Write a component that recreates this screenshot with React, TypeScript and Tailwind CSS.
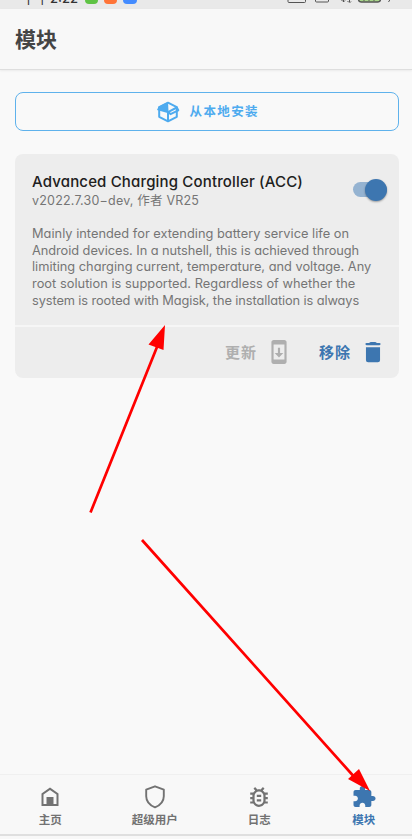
import React from "react";

const ui = "font-['Inter','Noto_Sans_CJK_SC',sans-serif]";
const cjk = "font-['Noto_Sans_CJK_SC',sans-serif]";

const description = [
  { text: "Mainly intended for extending battery service life on", track: "tracking-[0.020px]" },
  { text: "Android devices. In a nutshell, this is achieved through", track: "tracking-[-0.055px]" },
  { text: "limiting charging current, temperature, and voltage. Any", track: "tracking-[0px]" },
  { text: "root solution is supported. Regardless of whether the", track: "tracking-[0.035px]" },
  { text: "system is rooted with Magisk, the installation is always", track: "tracking-[-0.095px]" },
];

function StatusBar() {
  return (
    <div className="flex h-[9px] items-end overflow-hidden bg-[#e9e9e9] pl-[22px] text-[#333]">
      <div className={`${cjk} flex h-[9px] w-[63px] items-end whitespace-nowrap text-[13.500px] leading-[13px]`}>
        <span className="mb-[5px]">下午</span>
        <span className="mb-[4px] ml-px font-['Inter',sans-serif] text-[13px] font-medium">2:22</span>
      </div>
      <div className="flex h-[9px] gap-[6px]">
        <i className="-mt-[10px] h-[14px] w-[13px] rounded-[4px] bg-[#5fc344]" />
        <i className="-mt-[10px] h-[14px] w-[13px] rounded-[4px] bg-[#ff7438]" />
        <i className="-mt-[10px] h-[14px] w-[14px] rounded-[4px] bg-[#448cff]" />
      </div>
      <svg className="ml-auto mr-[24px] h-[9px] w-[106px]" viewBox="282 0 106 9" fill="none" stroke="#555" overflow="visible">
        <path d="M288-5v6.500q0 1 1 1h15.500q1 0 1-1V-5M315.500-5v6q0 1 1 1h11q1 0 1-1V-5" />
        <path d="M343.500-3v5M341.500 0l2 2 2-2M349.500-3v6M347.500 1l2 2 2-2" strokeDasharray="2 1" />
        <path d="M358.500-6v5q0 3 3 3h16q3 0 3-3v-5" fill="#a8d68a" strokeWidth="1.400" />
        <path d="M364 0v1M369 0v1M374 0v1" />
        <path d="M391-2l-2.500 4" />
      </svg>
    </div>
  );
}

function BoxIcon() {
  return (
    <svg className="h-[22px] w-[24px]" viewBox="0 0 24 22" fill="none" stroke="#4eabef" strokeWidth="2" strokeLinejoin="round">
      <path d="M12 1.700L20.800 6.200V15.800L12 20.300L3.200 15.800V6.200z" />
      <path d="M12 1L2.500 5.800L1 9L11.500 12L12.500 10z" fill="#4eabef" stroke="none" />
      <path d="M12 11v9M12.500 10.800L20.800 6.500L22.300 9.300L14.500 13.200z" />
    </svg>
  );
}

function Nav({ label, active, children }: { label: string; active?: boolean; children: React.ReactNode }) {
  return (
    <div className={`flex flex-1 flex-col items-center pt-[10px] ${active ? "text-[#3d76b0]" : "text-[#727272]"}`}>
      <svg className="h-[24px] w-[24px]" viewBox="0 0 24 24" fill="currentColor">{children}</svg>
      <span className={`${cjk} mt-[1.500px] text-[11.500px] font-bold leading-[16px]`}>{label}</span>
    </div>
  );
}

export default function App() {
  return (
    <div className={`${ui} relative flex h-[839px] w-[412px] flex-col overflow-hidden bg-[#f9f9f9]`}>
      <StatusBar />
      <header className="flex h-[61px] items-center border-b border-[#dedede] bg-[#f8f8f8] pb-[2px] pl-[15px] shadow-[0_1px_2px_rgba(0,0,0,0.06)]">
        <h1 className={`${cjk} text-[21px] font-bold leading-[30px] text-[#444]`}>模块</h1>
      </header>

      <main className="flex flex-1 flex-col pl-[15px] pr-[13px] pt-[22px]">
        <button className="flex h-[39px] items-center rounded-[8px] border border-[#5fb2ec] pl-[140px] text-[#4eabef]">
          <BoxIcon />
          <span className={`${cjk} ml-[9.500px] text-[12.500px] font-bold tracking-[1.400px]`}>从本地安装</span>
        </button>

        <section className="mt-[23px] h-[223.500px] rounded-[8px] bg-[#ededed]">
          <div className="flex h-[171px] flex-col pl-[17px] pt-[18px]">
            <div className="flex h-[38px] justify-between pr-[12px] whitespace-nowrap">
              <div>
                <h2 className="text-[15px] font-medium leading-[20px] tracking-[0.160px] text-[#202020] [font-feature-settings:'cv11']">Advanced Charging Controller (ACC)</h2>
                <p className="mt-px text-[12.500px] leading-[16px] tracking-[0.200px] text-[#757575] [font-feature-settings:'cv11']">v2022.7.30−dev, 作者 VR25</p>
              </div>
              <div className="mt-[10px] flex h-[15px] w-[34px] items-center justify-end rounded-full bg-[#95b3d1]">
                <i className="h-[22px] w-[22px] shrink-0 rounded-full bg-[#3d76b0] shadow-[0_1px_2px_rgba(0,0,0,0.35)]" />
              </div>
            </div>
            <div className="mt-[16px] whitespace-nowrap text-[12.800px] leading-[16.700px] text-[#757575] [font-feature-settings:'cv11']">
              {description.map((l) => (
                <p key={l.text} className={l.track}>{l.text}</p>
              ))}
            </div>
          </div>
          <div className={`${cjk} flex h-[52px] items-center border-t-[2px] border-[#f6f6f6] pl-[210px] text-[15px] font-bold leading-[22px] tracking-[1px]`}>
            <span className="text-[#afafaf]">更新</span>
            <svg className="ml-[9px] h-[26px] w-[26px]" viewBox="0 0 24 24" fill="#afafaf">
              <path d="M17 1.010L7 1c-1.100 0-2 .9-2 2v18c0 1.100.9 2 2 2h10c1.100 0 2-.9 2-2V3c0-1.100-.9-1.990-2-1.990zM17 19H7V5h10v14zm-1-6h-3V8h-2v5H8l4 4 4-4z" />
            </svg>
            <span className="ml-[27px] text-[#3d76b0]">移除</span>
            <svg className="ml-[8.500px] h-[26px] w-[26px]" viewBox="0 0 24 24" fill="#3d76b0">
              <path d="M5.500 7.500h13V19.500q0 2-2 2h-9q-2 0-2-2zM6 3.700h2.500Q9 2.700 10.300 2.700h3.400q1.300 0 1.800 1H18q1 0 1 1t-1 1H6q-1 0-1-1t1-1z" />
            </svg>
          </div>
        </section>
      </main>

      <nav className="-ml-[2px] -mr-[4px] flex h-[60px] border-t border-[#f0f0f0] bg-[#f8f8f8]">
        <Nav label="主页">
          <path d="M12 2.500L3.500 8.500V21h17V8.500zM5.500 19V9.500L12 5l6.500 4.500V19h-3v-7h-7v7z" />
        </Nav>
        <Nav label="超级用户">
          <path d="M12 1.300l8.800 3.300v6.600c0 4.900-3.600 9-8.800 11.200-5.200-2.200-8.800-6.300-8.800-11.200V4.600z" fill="none" stroke="currentColor" strokeWidth="1.900" strokeLinejoin="round" />
        </Nav>
        <Nav label="日志">
          <path d="M20 8h-2.810c-.45-.78-1.070-1.450-1.820-1.960L17 4.410 15.590 3l-2.170 2.170C12.960 5.060 12.490 5 12 5s-.96.06-1.410.17L8.410 3 7 4.410l1.620 1.630C7.880 6.550 7.260 7.220 6.810 8H4v2h2.090c-.05.33-.09.66-.09 1v1H4v2h2v1c0 .34.04.67.09 1H4v2h2.810c1.040 1.790 2.970 3 5.190 3s4.150-1.210 5.190-3H20v-2h-2.090c.05-.33.09-.66.09-1v-1h2v-2h-2v-1c0-.34-.04-.67-.09-1H20V8zm-4 4v3c0 .22-.03.47-.07.7l-.1.650-.37.650c-.72 1.240-2.040 2-3.460 2s-2.740-.77-3.460-2l-.37-.64-.1-.65C8.030 15.480 8 15.230 8 15v-4c0-.23.03-.48.07-.7l.1-.65.37-.65c.3-.52.720-.97 1.210-1.310l.57-.39.740-.18c.31-.08.630-.12.940-.12.320 0 .630.04.950.12l.68.160.61.420c.5.340.91.780 1.210 1.310l.38.650.1.650c.04.220.07.470.07.690v1zm-6 2h4v2h-4zm0-4h4v2h-4z" transform="translate(-1.2 -1.2) scale(1.100)" />
        </Nav>
        <Nav label="模块" active>
          <path d="M20.500 11H19V7c0-1.100-.9-2-2-2h-4V3.500C13 2.120 11.880 1 10.500 1S8 2.120 8 3.500V5H4c-1.100 0-1.990.9-1.990 2v3.800H3.500c1.490 0 2.700 1.210 2.700 2.700s-1.210 2.700-2.700 2.700H2V20c0 1.100.9 2 2 2h3.800v-1.500c0-1.490 1.210-2.700 2.700-2.700 1.490 0 2.700 1.210 2.700 2.700V22H17c1.100 0 2-.9 2-2v-4h1.500c1.380 0 2.500-1.120 2.500-2.500S21.880 11 20.500 11z" transform="translate(-.6 0) scale(1.050 1)" />
        </Nav>
      </nav>
      <div className="h-[5px] border-t-2 border-[#dfdfdf] bg-[#f8f8f8]" />

      <svg className="pointer-events-none absolute inset-0 h-[839px] w-[412px]" viewBox="0 0 412 839" fill="#ff0000">
        <path d="M90.500 512.500L159 342M142 540L357 780" stroke="#ff0000" strokeWidth="2.700" />
        <path d="M165 325l-16.500 19.500 15 5.500zM370 791l-22-12 11-10z" />
      </svg>
    </div>
  );
}
